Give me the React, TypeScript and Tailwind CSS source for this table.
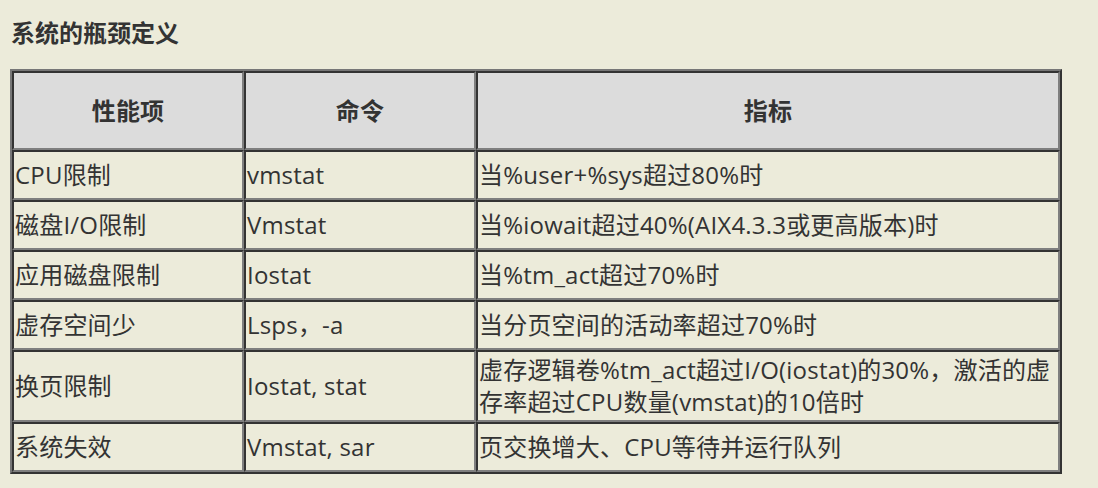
import React from "react";

const rows: { a: string; b: string; c: React.ReactNode; tall?: boolean }[] = [
  { a: "CPU限制", b: "vmstat", c: "当%user+%sys超过80%时" },
  { a: "磁盘I/O限制", b: "Vmstat", c: "当%iowait超过40%(AIX4.3.3或更高版本)时" },
  { a: "应用磁盘限制", b: "Iostat", c: "当%tm_act超过70%时" },
  { a: "虚存空间少", b: "Lsps，-a", c: "当分页空间的活动率超过70%时" },
  {
    a: "换页限制",
    b: "Iostat, stat",
    c: "虚存逻辑卷%tm_act超过I/O(iostat)的30%，激活的虚存率超过CPU数量(vmstat)的10倍时",
    tall: true,
  },
  { a: "系统失效", b: "Vmstat, sar", c: "页交换增大、CPU等待并运行队列" },
];

const cell =
  "border-2 border-t-[#333333] border-l-[#333333] border-b-[#7f7f7f] border-r-[#7f7f7f] px-px py-px align-middle";

export default function App() {
  return (
    <div
      className="w-[1098px] h-[488px] bg-[#ecebda] text-[#333333] pl-[10px] pt-[15px] overflow-hidden"
      style={{ fontFamily: '"Open Sans", "Noto Sans CJK SC", sans-serif' }}
    >
      <h2 className="text-[24px] leading-[36px] font-bold pl-px">系统的瓶颈定义</h2>
      <table className="mt-[18px] w-[1052px] table-fixed border-separate border-spacing-0 border-2 border-t-[#777777] border-l-[#777777] border-b-[#333333] border-r-[#333333] text-[24px] leading-[32px] tracking-[0.2px]">
        <colgroup>
          <col className="w-[232px]" />
          <col className="w-[232px]" />
          <col className="w-[584px]" />
        </colgroup>
        <thead>
          <tr>
            {["性能项", "命令", "指标"].map((h) => (
              <th key={h} className={`${cell} h-[79px] bg-[#dcdcdc] text-center font-bold`}>
                {h}
              </th>
            ))}
          </tr>
        </thead>
        <tbody>
          {rows.map((r) => (
            <tr key={r.a}>
              <td className={`${cell} ${r.tall ? "h-[72px]" : "h-[50px]"}`}>{r.a}</td>
              <td className={`${cell} ${r.tall ? "h-[72px]" : "h-[50px]"}`}>{r.b}</td>
              <td className={`${cell} ${r.tall ? "h-[72px]" : "h-[50px]"}`}>{r.c}</td>
            </tr>
          ))}
        </tbody>
      </table>
    </div>
  );
}
